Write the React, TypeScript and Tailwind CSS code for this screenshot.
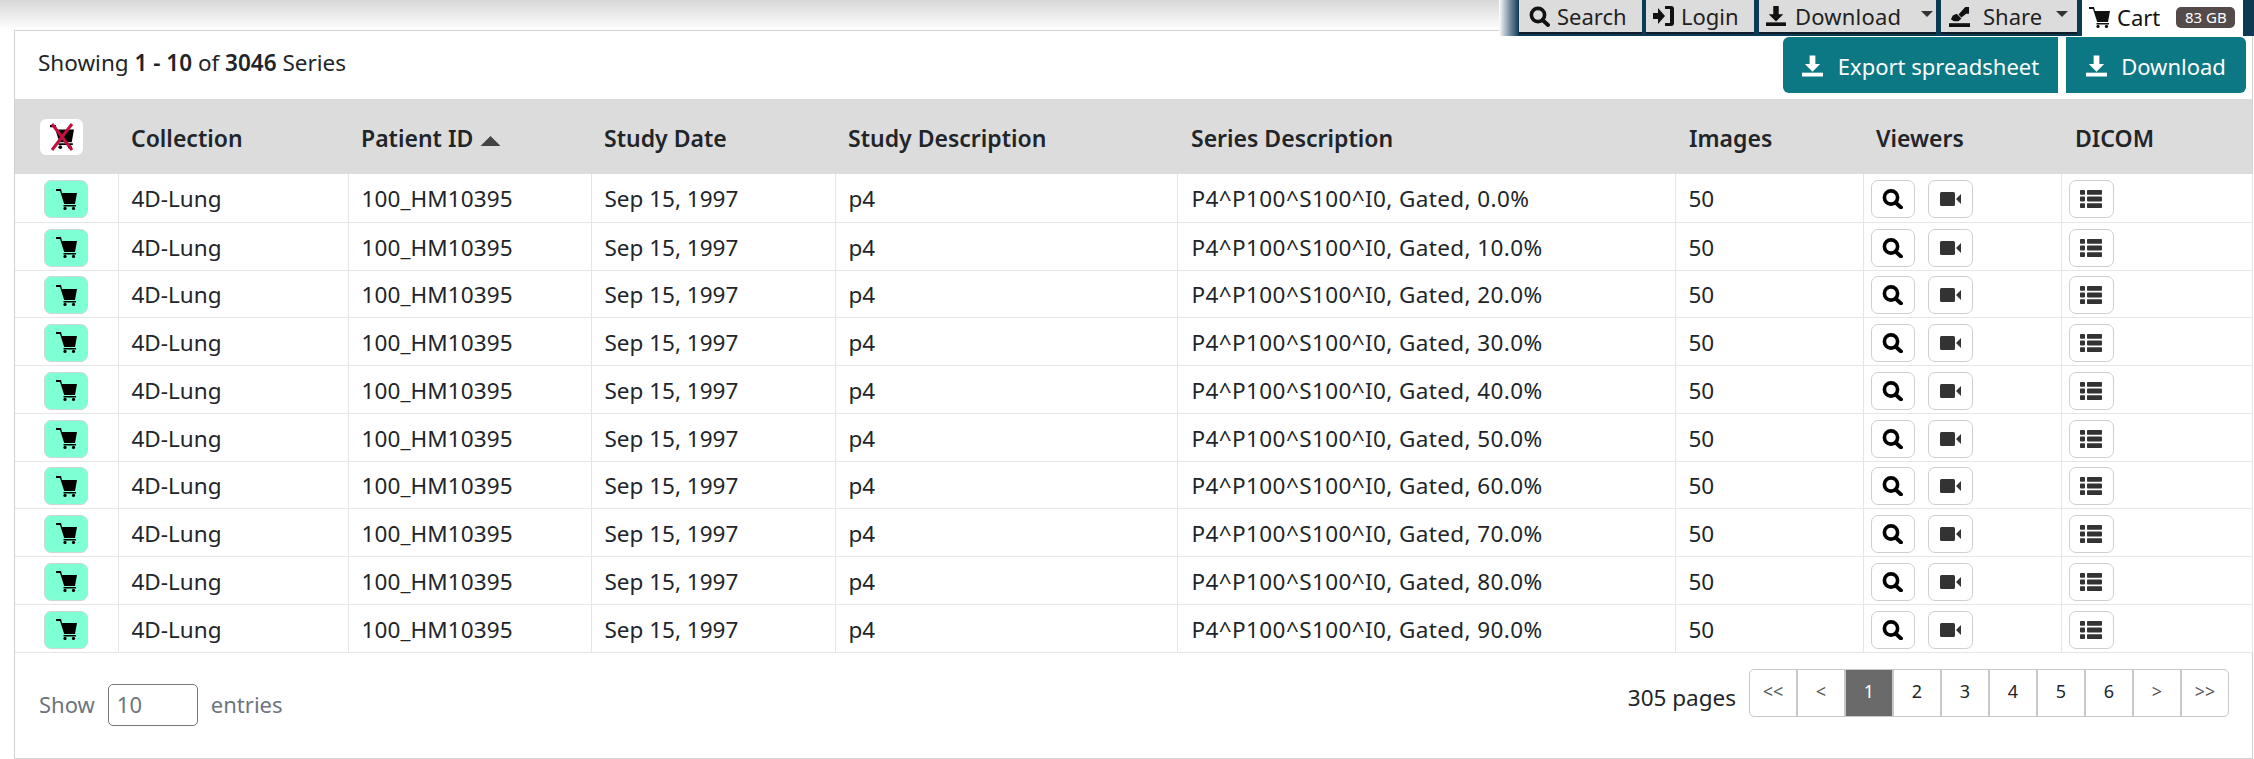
import React from "react";

const font = "font-['Noto_Sans','Open_Sans',sans-serif]";

function Cart({ className = "" }: { className?: string }) {
  return (
    <svg viewBox="0 0 21 21" className={className} fill="currentColor">
      <path d="M0 0h5l1 4h15l-2 11H8.2L4 2H0z" />
      <rect x="7.5" y="16" width="12.5" height="1.5" />
      <circle cx="9" cy="19.4" r="1.6" />
      <circle cx="17.5" cy="19.4" r="1.6" />
    </svg>
  );
}

function Dl({ className = "" }: { className?: string }) {
  return (
    <svg viewBox="0 0 22 22" className={className} fill="currentColor">
      <path d="M8 0h6v9h5l-8 8-8-8h5z" />
      <rect x="0" y="18" width="22" height="4" />
    </svg>
  );
}

function Mag({ className = "" }: { className?: string }) {
  return (
    <svg viewBox="0 0 21 20" className={className} fill="none" stroke="currentColor">
      <circle cx="9" cy="8.5" r="6.6" strokeWidth="3.6" />
      <path d="M13.5 13.5l5.5 5" strokeWidth="3.8" strokeLinecap="round" />
    </svg>
  );
}

function Cam() {
  return (
    <svg viewBox="0 0 21 14" className="w-[21px] h-[14px]" fill="#333">
      <rect x="0" y="0" width="15" height="14" rx="1.5" />
      <path d="M16 7l5-5v10z" />
    </svg>
  );
}

function Triangle() {
  return <svg viewBox="0 0 12 6" className="w-[12px] h-[6px]" fill="#333"><path d="M0 0h12L6 6z" /></svg>;
}

function ListIcon() {
  return (
    <svg viewBox="0 0 22 18" className="w-[22px] h-[18px]" fill="#333">
      <rect x="0" y="0" width="5" height="4.8" rx="0.8" />
      <rect x="7" y="0" width="15" height="4.8" rx="0.8" />
      <rect x="0" y="6.6" width="5" height="4.8" rx="0.8" />
      <rect x="7" y="6.6" width="15" height="4.8" rx="0.8" />
      <rect x="0" y="13.2" width="5" height="4.8" rx="0.8" />
      <rect x="7" y="13.2" width="15" height="4.8" rx="0.8" />
    </svg>
  );
}

function Nav() {
  const tab = "flex items-center shrink-0 h-[34px] bg-[#dcdcdc] text-[#222] text-[22px] border-b-2 border-[#101c28] whitespace-nowrap";
  return (
    <div className="absolute top-0 right-0 flex h-[36px] w-[755px] items-start bg-[#0b3a55]">
      <div className="w-[20px] h-[36px] shrink-0 bg-gradient-to-r from-white to-[#0b3a55]" />
      <div className={`${tab} w-[123px] pl-[10px] gap-[7px]`}><Mag className="w-[21px] h-[21px] text-[#111]" />Search</div>
      <div className={`${tab} w-[108px] ml-[4px] pl-[7px] gap-[7px]`}>
        <svg viewBox="0 0 21 20" className="w-[21px] h-[20px]" fill="#111"><path d="M0 7h5V2l7 8-7 8v-5H0z" /><path d="M12 0h6a3 3 0 0 1 3 3v14a3 3 0 0 1-3 3h-6v-3h5V3h-5z" /></svg>
        Login
      </div>
      <div className={`${tab} w-[177px] ml-[5px] pl-[6px] gap-[8px]`}>
        <Dl className="w-[22px] h-[20px] text-[#111]" /><span className="tracking-[0.2px]">Download</span><span className="ml-[12px] mb-[4px]"><Triangle /></span>
      </div>
      <div className={`${tab} w-[136px] ml-[5px] pl-[8px] gap-[13px]`}>
        <svg viewBox="0 0 22 22" className="w-[21px] h-[21px]" fill="#111">
          <path d="M10 9l7-8h4v7h-3l-5 4z" />
          <path d="M4 10l4-2 5 5-3 3H5l-3-2z" />
          <rect x="0" y="18" width="22" height="4" />
        </svg>
        Share<span className="ml-[1px] mb-[4px]"><Triangle /></span>
      </div>
      <div className="flex items-center shrink-0 h-[36px] w-[161px] ml-[5px] bg-white text-[#111] text-[22px] pl-[7px] pb-[2px] gap-[7px]">
        <Cart className="w-[21px] h-[21px]" />Cart
        <span className="ml-[9px] flex items-center justify-center h-[21px] w-[59px] rounded-[5px] bg-[#544a49] text-white text-[15px]">83 GB</span>
      </div>
    </div>
  );
}

const cols = [103, 230, 243, 244, 342, 498, 188, 198, 191];
const heads = ["", "Collection", "Patient ID", "Study Date", "Study Description", "Series Description", "Images", "Viewers", "DICOM"];
const pcts = ["0.0", "10.0", "20.0", "30.0", "40.0", "50.0", "60.0", "70.0", "80.0", "90.0"];
const td = "border-r border-b border-[#e6e6e6] pt-[3px] pb-0 text-[22.5px] text-[#212529] font-normal whitespace-nowrap";
const txt = `${td} px-[13px]`;
const iconBtn = "inline-flex items-center justify-center h-[38px] rounded-[7px] border border-[#cfcfcf] bg-white align-middle";

function Row({ pct, tall }: { pct: string; tall: boolean }) {
  return (
    <tr className={tall ? "h-[48px]" : "h-[47px]"}>
      <td className={`${td} text-center`}>
        <span className="inline-flex items-center justify-center w-[44px] h-[38px] rounded-[7px] bg-[#7fffd4] border border-[#c8dcd4] align-middle">
          <Cart className="w-[21px] h-[21px] text-black" />
        </span>
      </td>
      <td className={txt}>4D-Lung</td>
      <td className={`${txt} tracking-[0.1px]`}>100_HM10395</td>
      <td className={txt}>Sep 15, 1997</td>
      <td className={txt}>p4</td>
      <td className={`${td} pl-[14px] pr-[12px] tracking-[0.4px]`}>P4^P100^S100^I0, Gated, {pct}%</td>
      <td className={txt}>50</td>
      <td className={`${td} px-[7px]`}>
        <div className="flex gap-[13px]">
          <span className={`${iconBtn} w-[44px]`}><Mag className="w-[21px] h-[20px] text-black" /></span>
          <span className={`${iconBtn} w-[45px]`}><Cam /></span>
        </div>
      </td>
      <td className={`${td} px-[7px]`}>
        <span className={`${iconBtn} w-[45px]`}><ListIcon /></span>
      </td>
    </tr>
  );
}

export default function App() {
  const pageCells = ["<<", "<", "1", "2", "3", "4", "5", "6", ">", ">>"];
  return (
    <div className={`relative w-[2254px] h-[759px] bg-white overflow-hidden ${font} text-[#212529]`}>
      <div className="h-[30px] bg-gradient-to-b from-[#d8d8d8] to-white" />
      <Nav />
      <div className="ml-[14px] mr-[1px] h-[729px] border border-[#d2d2d2] bg-white">
        <div className="flex justify-between h-[68px] pl-[23px] pr-[6px]">
          <div className="pt-[15px] text-[22.5px] whitespace-nowrap">
            Showing <b className="font-semibold">1 - 10</b> of <b className="font-semibold">3046</b> Series
          </div>
          <div className="flex gap-[8px] pt-[6px]">
            <button className="flex items-center justify-center gap-[15px] w-[275px] h-[56px] pt-[2px] bg-[#0c7884] text-white text-[22px] rounded-l-[6px] whitespace-nowrap">
              <Dl className="w-[21px] h-[22px]" />Export spreadsheet
            </button>
            <button className="flex items-center justify-center gap-[14px] w-[180px] h-[56px] pt-[2px] bg-[#0c7884] text-white text-[22px] rounded-r-[6px] whitespace-nowrap">
              <Dl className="w-[21px] h-[22px]" />Download
            </button>
          </div>
        </div>
        <table className="w-[2237px] table-fixed border-collapse">
          <colgroup>{cols.map((c, i) => <col key={i} style={{ width: c }} />)}</colgroup>
          <thead>
            <tr className="h-[75px] bg-[#dcdcdc]">
              {heads.map((h, i) => (
                <th key={i} className={`text-left text-[23px] font-semibold whitespace-nowrap ${i === 0 ? "pl-[25px]" : i === 5 || i === 6 || i === 8 ? "pl-[14px] pt-[3px]" : "pl-[13px] pt-[3px]"}`}>
                  {i === 0 ? (
                    <span className="relative flex items-center justify-center w-[43px] h-[36px] rounded-[6px] bg-white">
                      <Cart className="w-[24px] h-[26px] text-black" />
                      <svg viewBox="0 0 24 28" className="absolute w-[24px] h-[30px]"><path d="M2 27L22 1M2 1l20 26" stroke="#c0103f" strokeWidth="3" /></svg>
                    </span>
                  ) : h}
                  {i === 2 && <svg viewBox="0 0 20 10" className="inline-block ml-[7px] w-[21px] h-[10px]" fill="#444"><path d="M0 10L10 0l10 10z" /></svg>}
                </th>
              ))}
            </tr>
          </thead>
          <tbody>{pcts.map((p, i) => <Row key={p} pct={p} tall={i !== 2 && i !== 6} />)}</tbody>
        </table>
        <div className="flex justify-between pl-[24px] pr-[23px]">
          <div className="flex items-center gap-[13px] pt-[31px] text-[22px] text-[#6c757d]">
            Show
            <span className="flex items-center w-[90px] h-[42px] border border-[#777] rounded-[5px] pl-[8px] text-[#6c757d]">10</span>
            entries
          </div>
          <div className="flex items-start gap-[13px] pt-[16px]">
            <span className="pt-[12px] text-[22.5px]">305 pages</span>
            <div className="flex h-[48px] w-[480px] border border-[#c8c8c8] rounded-[5px] text-[18px]">
              {pageCells.map((p, i) => (
                <span key={i} className={`flex items-center justify-center flex-1 pb-[3px] ${i ? "border-l-2 border-[#c8c8c8]" : ""} ${p === "1" ? "bg-[#6a6a6a] text-white" : i < 2 || i > 7 ? "text-[#555]" : "text-[#212529]"}`}>{p}</span>
              ))}
            </div>
          </div>
        </div>
      </div>
    </div>
  );
}
